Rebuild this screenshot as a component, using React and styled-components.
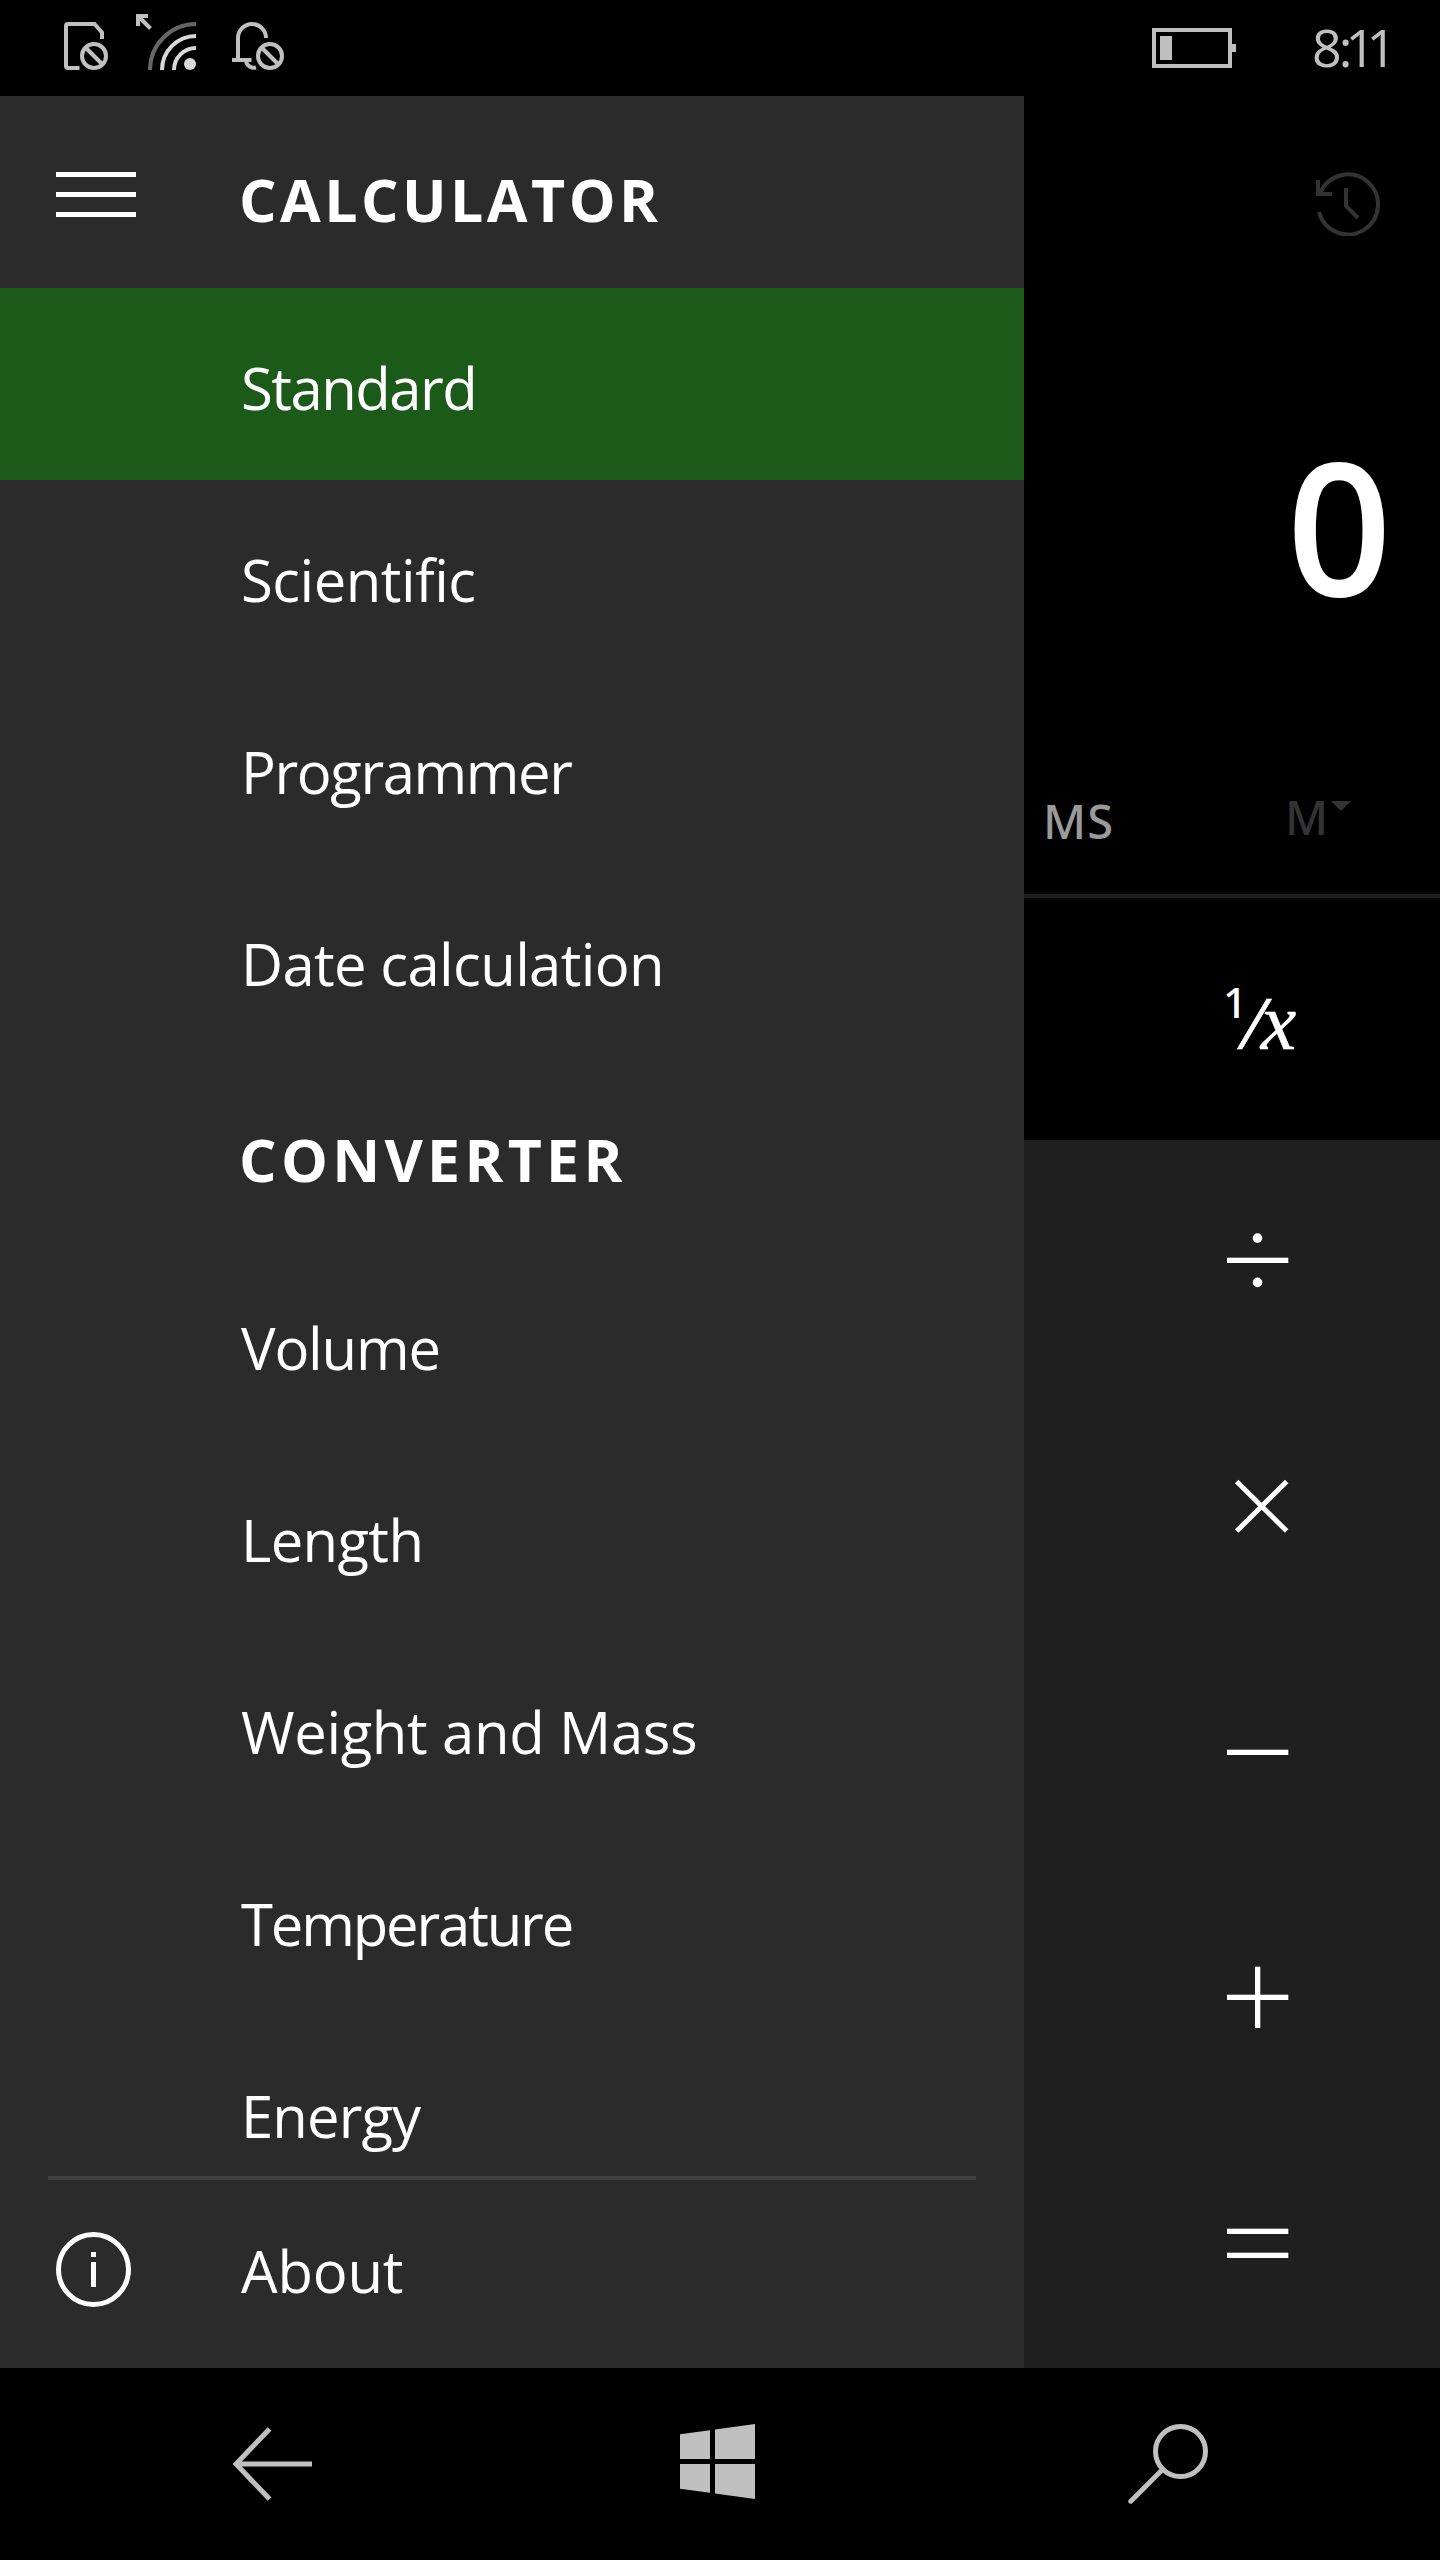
import React from "react";
import styled, { createGlobalStyle } from "styled-components";

const GlobalStyle = createGlobalStyle`
  * { box-sizing: border-box; }
  body { margin: 0; background: #000; }
  svg { display: block; flex: none; }
`;

const Phone = styled.div`
  display: flex;
  flex-direction: column;
  width: 1440px;
  height: 2560px;
  overflow: hidden;
  background: #000;
  color: #fff;
  font-family: "Open Sans", "Noto Sans", sans-serif;
`;

/* ---------- status bar ---------- */

const StatusBar = styled.header`
  display: flex;
  justify-content: space-between;
  height: 96px;
  padding: 0 53px 0 64px;
  color: #c0c0c0;
`;

const Signals = styled.div`
  display: flex;
  align-items: flex-end;
  padding-bottom: 26px;
`;

const SignalIcon = styled.svg`
  margin-right: ${(p) => p.$gap || 0}px;
  fill: none;
  stroke: currentColor;
  stroke-width: 4;
`;

const Power = styled.div`
  display: flex;
  align-items: center;
  gap: 76px;
`;

const Clock = styled.time`
  width: 75px;
  padding-bottom: 3px;
  font-size: 52px;
  line-height: 60px;
  letter-spacing: -3px;
  white-space: nowrap;
`;

const Tight = styled.span`
  letter-spacing: ${(p) => p.$by}px;
`;

/* ---------- app body ---------- */

const Body = styled.main`
  display: flex;
  height: 2272px;
`;

const Drawer = styled.nav`
  display: flex;
  flex-direction: column;
  width: 1024px;
  background: #2b2b2b;
`;

const MenuScroll = styled.div`
  flex: 1;
  min-height: 0;
  overflow: hidden;
`;

const Row = styled.div`
  display: flex;
  align-items: center;
  height: ${(p) => p.$height || 192}px;
  background: ${(p) => (p.$selected ? "#1b5a19" : "transparent")};
`;

const RowIcon = styled.div`
  width: 240px;
  padding: ${(p) => p.$pad || "0"};
  padding-left: 56px;
`;

const Label = styled.span`
  margin-left: 1px;
  padding-top: ${(p) => (p.$raised ? 0 : 7)}px;
  padding-bottom: ${(p) => (p.$raised ? 6 : 0)}px;
  font-size: 58px;
  line-height: 80px;
  letter-spacing: ${(p) => p.$track}px;
  white-space: nowrap;
`;

const Heading = styled.h2`
  margin: 0 0 0 -1px;
  padding-top: 13px;
  font-size: 59px;
  line-height: 80px;
  font-weight: 700;
  letter-spacing: ${(p) => p.$track}px;
`;

const Rule = styled.div`
  flex: none;
  height: 4px;
  margin: 0 48px;
  background: #404040;
`;

/* ---------- calculator ---------- */

const Calculator = styled.section`
  display: flex;
  flex-direction: column;
  width: 416px;
  font-family: "Noto Sans", "Open Sans", sans-serif;
`;

const HistoryBar = styled.div`
  display: flex;
  justify-content: flex-end;
  height: 192px;
  padding: 76px 60px 0 0;
  color: #333;
`;

const Display = styled.output`
  display: flex;
  align-items: center;
  justify-content: flex-end;
  height: 474px;
  padding-right: 49px;
  font-size: 181px;
  line-height: 240px;
  font-weight: 500;
  -webkit-text-stroke: 2px #fff;
`;

const MemoryBar = styled.div`
  display: grid;
  grid-template-columns: 176px 240px;
  height: 136px;
  border-bottom: 4px solid #1f1f1f;
  font-size: 47px;
  line-height: 60px;
  font-weight: 500;
`;

const MemoryKey = styled.div`
  display: flex;
  align-items: center;
  gap: 3px;
  padding: ${(p) => (p.$disabled ? "0 0 22px 85px" : "0 0 14px 19px")};
  color: ${(p) => (p.$disabled ? "#333" : "#9a9a9a")};
  letter-spacing: ${(p) => (p.$disabled ? 0 : 1)}px;
`;

const Caret = styled.svg`
  margin-bottom: 22px;
  fill: currentColor;
`;

const FunctionKey = styled.div`
  display: flex;
  align-items: center;
  height: 242px;
  padding: 6px 0 0 199px;
  font-family: "Liberation Serif", serif;
  font-style: italic;
  font-size: 80px;
  line-height: 100px;
  white-space: nowrap;
`;

const Variable = styled.span`
  -webkit-text-stroke: 0.4px #fff;
`;

const Numerator = styled.span`
  margin-right: 3px;
  font: normal 500 42px/0 "Noto Sans", sans-serif;
  vertical-align: 31px;
`;

const Slash = styled.span`
  margin-right: 2px;
  font: normal 400 69px/0 "Open Sans", sans-serif;
  -webkit-text-stroke: 0.5px #fff;
`;

const Operators = styled.div`
  display: grid;
  grid-template-rows: 246px 246px 245px 246px 245px;
  padding: 0 4px 0 56px;
  background: #1f1f1f;
`;

const OperatorKey = styled.div`
  display: flex;
  justify-content: center;
  padding-top: 89px;
`;

const bar = (y) => <rect y={y} width="61.3" height="5.3" />;

const OPERATORS = [
  ["divide", <>{bar(28.7)}<circle cx="30.5" cy="9.1" r="4.8" /><circle cx="30.5" cy="53.4" r="4.8" /></>],
  ["multiply", <path d="M9.7 6.5L59.7 56.1M59.7 6.5L9.7 56.1" stroke="#fff" strokeWidth="5" />],
  ["minus", bar(28.7)],
  ["plus", <>{bar(28.7)}<rect x="28" y="0.7" width="5.3" height="61.3" /></>],
  ["equals", <>{bar(16.7)}{bar(40.7)}</>],
];

/* ---------- navigation bar ---------- */

const NavBar = styled.footer`
  display: flex;
  align-items: center;
  gap: 368px;
  height: 192px;
  padding-left: 232px;
  color: #c0c0c0;
`;

const NavIcon = styled.svg`
  width: 80px;
  height: 80px;
  fill: none;
  stroke: currentColor;
  stroke-width: 5;
`;

const MENU = [
  { text: "Standard", track: -1.5, selected: true },
  { text: "Scientific", track: -0.5 },
  { text: "Programmer", track: -1.4 },
  { text: "Date calculation", track: -0.65 },
  { text: "CONVERTER", track: 4.3, heading: true },
  { text: "Volume", track: -1.2 },
  { text: "Length", track: -0.64 },
  { text: "Weight and Mass", track: -0.35 },
  { text: "Temperature", track: -2.15 },
  { text: "Energy", track: -0.9 },
];

const Blocked = ({ cx }) => (
  <>
    <circle cx={cx} cy="34" r="12" />
    <path d={`M${cx - 8.5} 25.5l17 17`} />
  </>
);

export default function App() {
  return (
    <Phone>
      <GlobalStyle />
      <StatusBar>
        <Signals>
          <SignalIcon width="44" height="48" $gap={28}>
            <path d="M38 17V10.5L30.5 2H4Q2 2 2 4V44Q2 46 4 46H15.5" />
            <Blocked cx={30} />
          </SignalIcon>
          <SignalIcon width="60" height="56" $gap={36}>
            <path d="M2 12V2H12M3 3L14.5 14.5" />
            <path d="M14 56A46 46 0 0 1 60 10" stroke="#666" />
            <path d="M26 56A34 34 0 0 1 60 22M38 56A22 22 0 0 1 60 34" stroke="#d9d9d9" />
            <circle cx="54" cy="50" r="6" fill="#d9d9d9" stroke="none" />
          </SignalIcon>
          <SignalIcon width="52" height="48">
            <path d="M6 38V16A14 14 0 0 1 34 16M0 38H19.5M14 39A8 8 0 0 0 24 45.5" />
            <Blocked cx={38} />
          </SignalIcon>
        </Signals>
        <Power>
          <svg width="84" height="40" fill="currentColor">
            <rect x="2" y="2" width="76" height="36" fill="none" stroke="currentColor" strokeWidth="4" />
            <rect x="8" y="8" width="12" height="24" />
            <rect x="80" y="16" width="4" height="8" />
          </svg>
          <Clock>
            8<Tight $by={-6.8}>:</Tight><Tight $by={-8.8}>11</Tight>
          </Clock>
        </Power>
      </StatusBar>

      <Body>
        <Drawer>
          <Row>
            <RowIcon $pad="5px 0 0">
              <svg width="80" height="45" fill="#fff">
                <path d="M0 0H80V5H0ZM0 20H80V25H0ZM0 40H80V45H0Z" />
              </svg>
            </RowIcon>
            <Heading $track={3.45}>CALCULATOR</Heading>
          </Row>
          <MenuScroll>
            {MENU.map((m) => (
              <Row key={m.text} $selected={m.selected}>
                <RowIcon />
                {m.heading ? (
                  <Heading $track={m.track}>{m.text}</Heading>
                ) : (
                  <Label $track={m.track}>{m.text}</Label>
                )}
              </Row>
            ))}
          </MenuScroll>
          <Rule />
          <Row $height={188}>
            <RowIcon $pad="0 0 9px">
              <svg width="75" height="75" fill="#fff">
                <circle cx="37.5" cy="37.5" r="35" fill="none" stroke="#fff" strokeWidth="5" />
                <path d="M35 20H40V25H35ZM35 30H40V55H35Z" />
              </svg>
            </RowIcon>
            <Label $track={-0.2} $raised>About</Label>
          </Row>
        </Drawer>

        <Calculator>
          <HistoryBar>
            <svg width="64" height="64" fill="none" stroke="currentColor" strokeWidth="4">
              <path d="M3 40A30 30 0 1 0 4.5 20.5M2 8V22H16M30 16V34L42 46" />
            </svg>
          </HistoryBar>
          <Display>0</Display>
          <MemoryBar>
            <MemoryKey>MS</MemoryKey>
            <MemoryKey $disabled>
              M
              <Caret width="20" height="10">
                <path d="M0 0H20L10 10Z" />
              </Caret>
            </MemoryKey>
          </MemoryBar>
          <FunctionKey>
            <div>
              <Numerator>1</Numerator>
              <Slash>⁄</Slash>
              <Variable>x</Variable>
            </div>
          </FunctionKey>
          <Operators>
            {OPERATORS.map(([name, shape]) => (
              <OperatorKey key={name}>
                <svg width="62" height="62" fill="#fff" aria-label={name}>{shape}</svg>
              </OperatorKey>
            ))}
          </Operators>
        </Calculator>
      </Body>

      <NavBar>
        <NavIcon>
          <path d="M80 40H5M37.5 5L4 40L37.5 75" />
        </NavIcon>
        <NavIcon>
          <path
            fill="currentColor"
            stroke="none"
            d="M0 10.3L30 6.3V35H0ZM35 5.5L75 0V35H35ZM0 40H30V68.7L0 64.7ZM35 40H75V75L35 69.5Z"
          />
        </NavIcon>
        <NavIcon strokeLinecap="round">
          <circle cx="52.5" cy="27.5" r="25" />
          <path d="M34.5 45.5L2.8 77.2" />
        </NavIcon>
      </NavBar>
    </Phone>
  );
}
